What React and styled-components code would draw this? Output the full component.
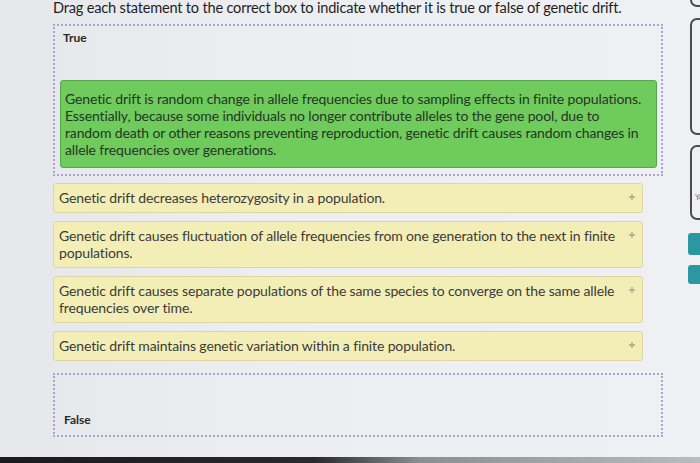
import styled, { createGlobalStyle } from "styled-components";

const GlobalStyle = createGlobalStyle`
    html, body {
        margin: 0;
        padding: 0;
        background: #e9eaee;
        overflow: hidden;
    }
    body {
        font-family: Lato, "Open Sans", sans-serif;
    }
`;

const trueItems = [
    [
        "Genetic drift is random change in allele frequencies due to sampling effects in finite populations.",
        "Essentially, because some individuals no longer contribute alleles to the gene pool, due to",
        "random death or other reasons preventing reproduction, genetic drift causes random changes in",
        "allele frequencies over generations."
    ]
];

const choices = [
    ["Genetic drift decreases heterozygosity in a population."],
    [
        "Genetic drift causes fluctuation of allele frequencies from one generation to the next in finite",
        "populations."
    ],
    [
        "Genetic drift causes separate populations of the same species to converge on the same allele",
        "frequencies over time."
    ],
    ["Genetic drift maintains genetic variation within a finite population."]
];

const Lines = ({ lines }) => lines.map((l, i) => <Line key={i}>{l}</Line>);

const Plus = () => (
    <PlusIcon viewBox="0 0 8 8">
        <path d="M4 1v6M1 4h6" stroke="#aaa68e" strokeWidth="1.4" />
    </PlusIcon>
);

const App = () => {
    return (
        <Page>
            <GlobalStyle />
            <Row>
                <Main>
                    <Title>Drag each statement to the correct box to indicate whether it is true or false of genetic drift.</Title>
                    <Zone $top>
                        <Label $gap>True</Label>
                        {trueItems.map((t, i) => (
                            <Placed key={i}>
                                <Lines lines={t} />
                            </Placed>
                        ))}
                    </Zone>
                    <Choices>
                        {choices.map((c, i) => (
                            <Card key={i}>
                                <CardText>
                                    <Lines lines={c} />
                                </CardText>
                                <Plus />
                            </Card>
                        ))}
                    </Choices>
                    <Zone>
                        <Label>False</Label>
                    </Zone>
                </Main>
                <Side>
                    <SideBox $h={27} $mt={-20} />
                    <SideBox $h={117} $mt={11} />
                    <SideBox $h={75} $mt={10}>
                        <Hint>Yo</Hint>
                    </SideBox>
                    <TealButton $h={22} $mt={13} />
                    <TealButton $h={19} $mt={10} />
                </Side>
            </Row>
            <Bezel />
        </Page>
    );
};

const Page = styled.div`
    width: 700px;
    height: 463px;
    overflow: hidden;
    display: flex;
    flex-direction: column;
    background: linear-gradient(90deg, #e6e7eb 0%, #eceef2 40%, #eef0f4 100%);
`;

const Row = styled.div`
    display: flex;
    flex: 1;
`;

const Main = styled.div`
    width: 610px;
    margin-left: 53px;
    flex-shrink: 0;
`;

const Title = styled.h1`
    margin: 0;
    padding-top: 0;
    height: 24px;
    font-size: 14.6px;
    line-height: 16px;
    letter-spacing: -0.2px;
    font-weight: 400;
    white-space: nowrap;
    color: #1e1e1e;
`;

const Zone = styled.div`
    box-sizing: border-box;
    width: 610px;
    height: ${props => props.$top ? "152px" : "64px"};
    margin-top: ${props => props.$top ? "0" : "12px"};
    border: 2px dotted #a7a3d4;
    padding: ${props => props.$top ? "5px 4px 0 5px" : "0 4px 8px 6px"};
    display: flex;
    flex-direction: column;
    justify-content: ${props => props.$top ? "flex-start" : "flex-end"};
`;

const Label = styled.div`
    font-size: 12px;
    font-weight: 700;
    line-height: 14px;
    color: #2a2a2a;
    padding-left: 3px;
    margin-bottom: ${props => props.$gap ? "35px" : "0"};
`;

const Placed = styled.div`
    box-sizing: border-box;
    height: 88px;
    background: #6fcb5c;
    border: 1px solid #55a54a;
    border-radius: 3px;
    padding: 9px 4px;
    font-size: 14px;
    letter-spacing: -0.13px;
    line-height: 17px;
    color: #253525;
`;

const Line = styled.div`
    white-space: nowrap;
`;

const Choices = styled.div`
    display: flex;
    flex-direction: column;
    gap: 8px;
    margin-top: 7px;
    width: 590px;
`;

const Card = styled.div`
    box-sizing: border-box;
    display: flex;
    justify-content: space-between;
    align-items: flex-start;
    background: #f3eeb6;
    border: 1px solid #ddd6a2;
    border-radius: 3px;
    padding: 5px 6px 6px 5px;
`;

const CardText = styled.div`
    font-size: 14px;
    letter-spacing: -0.13px;
    line-height: 17px;
    color: #3b3b3b;
`;

const PlusIcon = styled.svg`
    width: 8px;
    height: 8px;
    margin-top: 4px;
    flex-shrink: 0;
`;

const Side = styled.div`
    margin-left: 25px;
    display: flex;
    flex-direction: column;
    width: 40px;
    flex-shrink: 0;
`;

const SideBox = styled.div`
    box-sizing: border-box;
    height: ${props => props.$h}px;
    margin-top: ${props => props.$mt}px;
    margin-left: 2px;
    border: 2px solid #4d4b50;
    border-radius: 7px;
    display: flex;
    align-items: flex-end;
    padding: 0 0 16px 3px;
`;

const Hint = styled.span`
    font-size: 8px;
    color: #6a6a6a;
`;

const TealButton = styled.div`
    height: ${props => props.$h}px;
    margin-top: ${props => props.$mt}px;
    background: #2a97a3;
    border-radius: 3px;
`;

const Bezel = styled.div`
    height: 6px;
    flex-shrink: 0;
    background: linear-gradient(90deg, #1b1b1d 0%, #2a2a2c 45%, #8d8e92 60%, #b9bbbf 100%);
`;

export default App;
